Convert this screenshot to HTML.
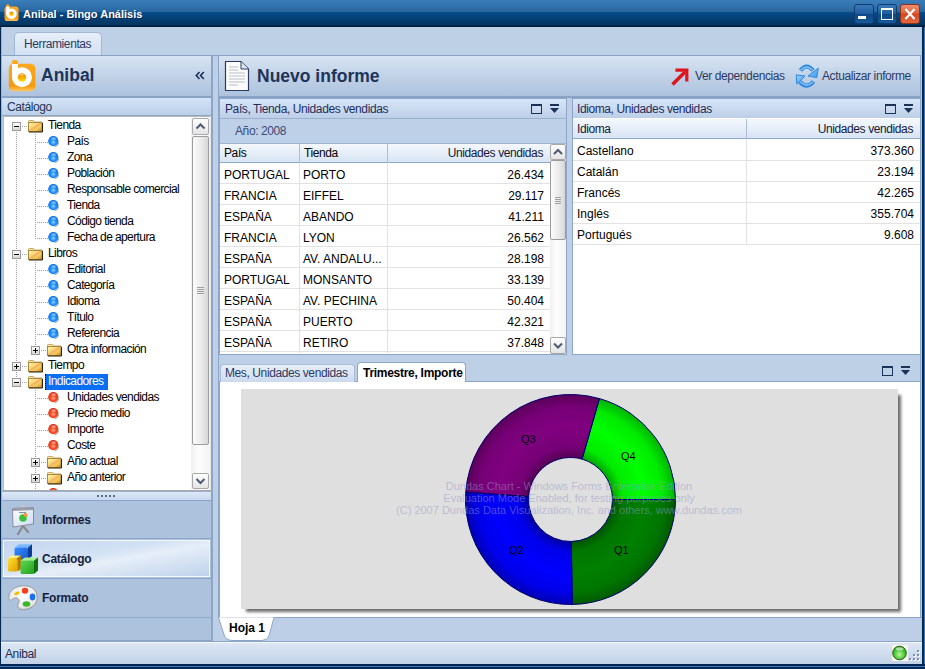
<!DOCTYPE html>
<html><head><meta charset="utf-8"><style>
*{box-sizing:border-box}
html,body{margin:0;padding:0;width:925px;height:669px;overflow:hidden;background:#BDD0E6;font-family:"Liberation Sans",sans-serif;font-size:12px;letter-spacing:-0.4px;color:#000}
.a{position:absolute}
.t{position:absolute;white-space:nowrap;line-height:1}
.exp{position:absolute;width:9px;height:9px;border:1px solid #9A9A9A;background:linear-gradient(#FFFFFF,#D6D6D6)}
.wbtn{position:absolute;top:4px;width:20px;height:20px;border:1px solid #0E3C70;border-radius:3px;background:linear-gradient(#3A7ABB,#1D5C9E 50%,#0D4787 51%,#195A99)}
.hdr{position:absolute;background:linear-gradient(#D6E3F2,#ADC2DE);border-bottom:2px solid #8AA2C4}
.cap{position:absolute;background:linear-gradient(#D4E3F7,#BCD0E9);border-bottom:1px solid #9AB0CC}
.gh{position:absolute;background:linear-gradient(#F4F8FD,#D8E4F4);border-bottom:1px solid #8FA9CC}
.r{text-align:right}
</style></head><body>
<div class="a" style="left:0px;top:0px;width:925px;height:27px;background:linear-gradient(#3B7EBA 0px,#2966A0 12px,#064C8B 12px,#04345F 25px,#001A3A 26px,#001A3A 27px)"></div>
<svg class="a" style="left:4px;top:4px" width="16" height="18" viewBox="0 0 30 34"><rect x="0.8" y="4.8" width="26.6" height="27.5" rx="6" fill="url(#lg)"/><rect x="4" y="1" width="6" height="6" rx="2" fill="#FFA820"/><rect x="4" y="5" width="6" height="14" fill="#fff"/><circle cx="14" cy="18.3" r="10" fill="#fff"/><circle cx="14" cy="18.5" r="4.2" fill="url(#lgi)"/></svg>
<div class="t" style="left:23px;top:9px;color:#fff;font-weight:bold;font-size:11px;letter-spacing:0;text-shadow:1px 1px 0 #0A2A55">Anibal - Bingo Análisis</div>
<div class="wbtn" style="left:854px"></div>
<div class="wbtn" style="left:877px"></div>
<div class="wbtn" style="left:900px;border-color:#8A3418;background:linear-gradient(#EE8E70,#E2603A 45%,#D8421A 50%,#E36A42)"></div>
<div class="a" style="left:858px;top:16px;width:8px;height:3px;background:#fff"></div>
<div class="a" style="left:881px;top:8px;width:12px;height:12px;border:1px solid #fff;border-top-width:2px"></div>
<svg class="a" style="left:900px;top:4px" width="20" height="20"><path d="M5.5 5L14.5 15M14.5 5L5.5 15" stroke="#fff" stroke-width="2.2"/></svg>
<div class="a" style="left:0px;top:27px;width:1px;height:642px;background:#04284F"></div>
<div class="a" style="left:1px;top:27px;width:1px;height:615px;background:#9BB3D3"></div>
<div class="a" style="left:922px;top:27px;width:2px;height:642px;background:#062A50"></div>
<div class="a" style="left:924px;top:27px;width:1px;height:642px;background:#3A78B8"></div>
<div class="a" style="left:0px;top:664px;width:925px;height:5px;background:linear-gradient(#04284F 0 2px,#3A7AC0 2px 3px,#04284F 3px)"></div>
<div class="a" style="left:14px;top:32px;width:88px;height:24px;border:1px solid #A2B7D3;border-bottom:none;border-radius:5px 5px 0 0;background:linear-gradient(#E6EEF9,#D3E0F1)"></div>
<div class="t" style="left:24px;top:38px;color:#2B3A62">Herramientas</div>
<div class="a" style="left:2px;top:55px;width:920px;height:1px;background:#8AA3C4"></div>
<div class="hdr" style="left:2px;top:56px;width:209px;height:42px"></div>
<svg class="a" style="left:8px;top:59px" width="30" height="34" viewBox="0 0 30 34"><defs><linearGradient id="lg" x1="0" y1="0" x2="0" y2="1"><stop offset="0" stop-color="#FFA820"/><stop offset="0.8" stop-color="#F59A10"/><stop offset="1" stop-color="#FFC860"/></linearGradient><linearGradient id="lgi" x1="0" y1="0" x2="0" y2="1"><stop offset="0" stop-color="#F08A00"/><stop offset="0.6" stop-color="#F8B000"/><stop offset="1" stop-color="#FFE800"/></linearGradient></defs><rect x="0.8" y="4.8" width="26.6" height="27.5" rx="5" fill="url(#lg)"/><rect x="4" y="1" width="6" height="6" rx="2" fill="#FFA820"/><rect x="4" y="5" width="6" height="14" fill="#fff"/><circle cx="14" cy="18.3" r="10" fill="#fff"/><circle cx="14" cy="18.5" r="4.2" fill="url(#lgi)"/><ellipse cx="14" cy="15.6" rx="2" ry="0.9" fill="rgba(255,255,255,0.5)"/></svg>
<div class="t" style="left:41px;top:67px;font-size:17.5px;letter-spacing:0;font-weight:bold;color:#1E3458">Anibal</div>
<svg class="a" style="left:195px;top:71px" width="10" height="9"><path d="M4.5 1L1.3 4.5L4.5 8M8.8 1L5.6 4.5L8.8 8" stroke="#1E3458" stroke-width="1.7" fill="none"/></svg>
<div class="cap" style="left:2px;top:98px;width:210px;height:18px;border-bottom-color:#8EA6C6"></div>
<div class="t" style="left:7px;top:101px;color:#1E3458">Catálogo</div>
<div class="a" style="left:3px;top:116px;width:208px;height:375px;background:#fff;border-left:1px solid #B8B8B8;border-top:1px solid #B8B8B8"></div>
<div class="a" style="left:210px;top:116px;width:1px;height:375px;background:#E8E8E8"></div>
<div class="a" style="left:211px;top:56px;width:2px;height:586px;background:#8DA6C8"></div>
<div class="a" style="left:0;top:0;width:925px;height:491px;clip-path:polygon(4px 117px,210px 117px,210px 490px,4px 490px)"><svg width="0" height="0" style="position:absolute"><defs><linearGradient id="fg" x1="0" y1="0.1" x2="0.9" y2="1"><stop offset="0" stop-color="#FFF6B0"/><stop offset="0.35" stop-color="#FAD878"/><stop offset="0.5" stop-color="#F2B460"/><stop offset="0.68" stop-color="#F8CC60"/><stop offset="1" stop-color="#C88A18"/></linearGradient><radialGradient id="gb" cx="0.5" cy="0.6" r="0.58"><stop offset="0" stop-color="#90D4FF"/><stop offset="0.45" stop-color="#1E90FF"/><stop offset="1" stop-color="#1070E8"/></radialGradient><radialGradient id="gr" cx="0.5" cy="0.6" r="0.58"><stop offset="0" stop-color="#FFB090"/><stop offset="0.45" stop-color="#F84C28"/><stop offset="1" stop-color="#D83414"/></radialGradient></defs></svg><div class="a" style="left:16px;top:132px;width:1px;height:249px;background:repeating-linear-gradient(180deg,#A0A0A0 0 1px,transparent 1px 2px)"></div><div class="a" style="left:35px;top:134px;width:1px;height:105px;background:repeating-linear-gradient(180deg,#A0A0A0 0 1px,transparent 1px 2px)"></div><div class="a" style="left:35px;top:262px;width:1px;height:89px;background:repeating-linear-gradient(180deg,#A0A0A0 0 1px,transparent 1px 2px)"></div><div class="a" style="left:35px;top:390px;width:1px;height:106px;background:repeating-linear-gradient(180deg,#A0A0A0 0 1px,transparent 1px 2px)"></div><div class="exp" style="left:12px;top:122px"></div><div class="a" style="left:14px;top:126px;width:5px;height:1px;background:#000"></div><div class="a" style="left:22px;top:126px;width:6px;height:1px;background:repeating-linear-gradient(90deg,#A0A0A0 0 1px,transparent 1px 2px)"></div><svg class="a" style="left:28px;top:120px" width="16" height="13" viewBox="0 0 16 13"><path d="M0.5 2.5V1.3Q0.5 0.5 1.3 0.5H5.5L6.5 2H14" fill="#FBEBB0" stroke="#C8A868" stroke-width="1"/><rect x="0.5" y="2.5" width="13.5" height="9" fill="url(#fg)" stroke="#A8883A" stroke-width="1"/><path d="M14.5 3V12H1" stroke="#2A2010" stroke-width="1" fill="none"/></svg><div class="t" style="left:48px;top:119px;font-size:12px;letter-spacing:-0.6px">Tienda</div><div class="a" style="left:37px;top:142px;width:11px;height:1px;background:repeating-linear-gradient(90deg,#A0A0A0 0 1px,transparent 1px 2px)"></div><svg class="a" style="left:48px;top:136px" width="12" height="12" viewBox="0 0 12 12"><circle cx="5.3" cy="5.2" r="5.1" fill="url(#gb)"/><ellipse cx="5.5" cy="2.6" rx="2.4" ry="1.2" fill="rgba(255,255,255,0.45)"/><path d="M10.8 6.5A5.3 5.3 0 0 1 6.5 10.8" stroke="rgba(0,0,0,0.28)" stroke-width="1.2" fill="none"/></svg><div class="t" style="left:67px;top:135px;font-size:12px;letter-spacing:-0.6px">País</div><div class="a" style="left:37px;top:158px;width:11px;height:1px;background:repeating-linear-gradient(90deg,#A0A0A0 0 1px,transparent 1px 2px)"></div><svg class="a" style="left:48px;top:152px" width="12" height="12" viewBox="0 0 12 12"><circle cx="5.3" cy="5.2" r="5.1" fill="url(#gb)"/><ellipse cx="5.5" cy="2.6" rx="2.4" ry="1.2" fill="rgba(255,255,255,0.45)"/><path d="M10.8 6.5A5.3 5.3 0 0 1 6.5 10.8" stroke="rgba(0,0,0,0.28)" stroke-width="1.2" fill="none"/></svg><div class="t" style="left:67px;top:151px;font-size:12px;letter-spacing:-0.6px">Zona</div><div class="a" style="left:37px;top:174px;width:11px;height:1px;background:repeating-linear-gradient(90deg,#A0A0A0 0 1px,transparent 1px 2px)"></div><svg class="a" style="left:48px;top:168px" width="12" height="12" viewBox="0 0 12 12"><circle cx="5.3" cy="5.2" r="5.1" fill="url(#gb)"/><ellipse cx="5.5" cy="2.6" rx="2.4" ry="1.2" fill="rgba(255,255,255,0.45)"/><path d="M10.8 6.5A5.3 5.3 0 0 1 6.5 10.8" stroke="rgba(0,0,0,0.28)" stroke-width="1.2" fill="none"/></svg><div class="t" style="left:67px;top:167px;font-size:12px;letter-spacing:-0.6px">Población</div><div class="a" style="left:37px;top:190px;width:11px;height:1px;background:repeating-linear-gradient(90deg,#A0A0A0 0 1px,transparent 1px 2px)"></div><svg class="a" style="left:48px;top:184px" width="12" height="12" viewBox="0 0 12 12"><circle cx="5.3" cy="5.2" r="5.1" fill="url(#gb)"/><ellipse cx="5.5" cy="2.6" rx="2.4" ry="1.2" fill="rgba(255,255,255,0.45)"/><path d="M10.8 6.5A5.3 5.3 0 0 1 6.5 10.8" stroke="rgba(0,0,0,0.28)" stroke-width="1.2" fill="none"/></svg><div class="t" style="left:67px;top:183px;font-size:12px;letter-spacing:-0.6px">Responsable comercial</div><div class="a" style="left:37px;top:206px;width:11px;height:1px;background:repeating-linear-gradient(90deg,#A0A0A0 0 1px,transparent 1px 2px)"></div><svg class="a" style="left:48px;top:200px" width="12" height="12" viewBox="0 0 12 12"><circle cx="5.3" cy="5.2" r="5.1" fill="url(#gb)"/><ellipse cx="5.5" cy="2.6" rx="2.4" ry="1.2" fill="rgba(255,255,255,0.45)"/><path d="M10.8 6.5A5.3 5.3 0 0 1 6.5 10.8" stroke="rgba(0,0,0,0.28)" stroke-width="1.2" fill="none"/></svg><div class="t" style="left:67px;top:199px;font-size:12px;letter-spacing:-0.6px">Tienda</div><div class="a" style="left:37px;top:222px;width:11px;height:1px;background:repeating-linear-gradient(90deg,#A0A0A0 0 1px,transparent 1px 2px)"></div><svg class="a" style="left:48px;top:216px" width="12" height="12" viewBox="0 0 12 12"><circle cx="5.3" cy="5.2" r="5.1" fill="url(#gb)"/><ellipse cx="5.5" cy="2.6" rx="2.4" ry="1.2" fill="rgba(255,255,255,0.45)"/><path d="M10.8 6.5A5.3 5.3 0 0 1 6.5 10.8" stroke="rgba(0,0,0,0.28)" stroke-width="1.2" fill="none"/></svg><div class="t" style="left:67px;top:215px;font-size:12px;letter-spacing:-0.6px">Código tienda</div><div class="a" style="left:37px;top:238px;width:11px;height:1px;background:repeating-linear-gradient(90deg,#A0A0A0 0 1px,transparent 1px 2px)"></div><svg class="a" style="left:48px;top:232px" width="12" height="12" viewBox="0 0 12 12"><circle cx="5.3" cy="5.2" r="5.1" fill="url(#gb)"/><ellipse cx="5.5" cy="2.6" rx="2.4" ry="1.2" fill="rgba(255,255,255,0.45)"/><path d="M10.8 6.5A5.3 5.3 0 0 1 6.5 10.8" stroke="rgba(0,0,0,0.28)" stroke-width="1.2" fill="none"/></svg><div class="t" style="left:67px;top:231px;font-size:12px;letter-spacing:-0.6px">Fecha de apertura</div><div class="exp" style="left:12px;top:250px"></div><div class="a" style="left:14px;top:254px;width:5px;height:1px;background:#000"></div><div class="a" style="left:22px;top:254px;width:6px;height:1px;background:repeating-linear-gradient(90deg,#A0A0A0 0 1px,transparent 1px 2px)"></div><svg class="a" style="left:28px;top:248px" width="16" height="13" viewBox="0 0 16 13"><path d="M0.5 2.5V1.3Q0.5 0.5 1.3 0.5H5.5L6.5 2H14" fill="#FBEBB0" stroke="#C8A868" stroke-width="1"/><rect x="0.5" y="2.5" width="13.5" height="9" fill="url(#fg)" stroke="#A8883A" stroke-width="1"/><path d="M14.5 3V12H1" stroke="#2A2010" stroke-width="1" fill="none"/></svg><div class="t" style="left:48px;top:247px;font-size:12px;letter-spacing:-0.6px">Libros</div><div class="a" style="left:37px;top:270px;width:11px;height:1px;background:repeating-linear-gradient(90deg,#A0A0A0 0 1px,transparent 1px 2px)"></div><svg class="a" style="left:48px;top:264px" width="12" height="12" viewBox="0 0 12 12"><circle cx="5.3" cy="5.2" r="5.1" fill="url(#gb)"/><ellipse cx="5.5" cy="2.6" rx="2.4" ry="1.2" fill="rgba(255,255,255,0.45)"/><path d="M10.8 6.5A5.3 5.3 0 0 1 6.5 10.8" stroke="rgba(0,0,0,0.28)" stroke-width="1.2" fill="none"/></svg><div class="t" style="left:67px;top:263px;font-size:12px;letter-spacing:-0.6px">Editorial</div><div class="a" style="left:37px;top:286px;width:11px;height:1px;background:repeating-linear-gradient(90deg,#A0A0A0 0 1px,transparent 1px 2px)"></div><svg class="a" style="left:48px;top:280px" width="12" height="12" viewBox="0 0 12 12"><circle cx="5.3" cy="5.2" r="5.1" fill="url(#gb)"/><ellipse cx="5.5" cy="2.6" rx="2.4" ry="1.2" fill="rgba(255,255,255,0.45)"/><path d="M10.8 6.5A5.3 5.3 0 0 1 6.5 10.8" stroke="rgba(0,0,0,0.28)" stroke-width="1.2" fill="none"/></svg><div class="t" style="left:67px;top:279px;font-size:12px;letter-spacing:-0.6px">Categoría</div><div class="a" style="left:37px;top:302px;width:11px;height:1px;background:repeating-linear-gradient(90deg,#A0A0A0 0 1px,transparent 1px 2px)"></div><svg class="a" style="left:48px;top:296px" width="12" height="12" viewBox="0 0 12 12"><circle cx="5.3" cy="5.2" r="5.1" fill="url(#gb)"/><ellipse cx="5.5" cy="2.6" rx="2.4" ry="1.2" fill="rgba(255,255,255,0.45)"/><path d="M10.8 6.5A5.3 5.3 0 0 1 6.5 10.8" stroke="rgba(0,0,0,0.28)" stroke-width="1.2" fill="none"/></svg><div class="t" style="left:67px;top:295px;font-size:12px;letter-spacing:-0.6px">Idioma</div><div class="a" style="left:37px;top:318px;width:11px;height:1px;background:repeating-linear-gradient(90deg,#A0A0A0 0 1px,transparent 1px 2px)"></div><svg class="a" style="left:48px;top:312px" width="12" height="12" viewBox="0 0 12 12"><circle cx="5.3" cy="5.2" r="5.1" fill="url(#gb)"/><ellipse cx="5.5" cy="2.6" rx="2.4" ry="1.2" fill="rgba(255,255,255,0.45)"/><path d="M10.8 6.5A5.3 5.3 0 0 1 6.5 10.8" stroke="rgba(0,0,0,0.28)" stroke-width="1.2" fill="none"/></svg><div class="t" style="left:67px;top:311px;font-size:12px;letter-spacing:-0.6px">Título</div><div class="a" style="left:37px;top:334px;width:11px;height:1px;background:repeating-linear-gradient(90deg,#A0A0A0 0 1px,transparent 1px 2px)"></div><svg class="a" style="left:48px;top:328px" width="12" height="12" viewBox="0 0 12 12"><circle cx="5.3" cy="5.2" r="5.1" fill="url(#gb)"/><ellipse cx="5.5" cy="2.6" rx="2.4" ry="1.2" fill="rgba(255,255,255,0.45)"/><path d="M10.8 6.5A5.3 5.3 0 0 1 6.5 10.8" stroke="rgba(0,0,0,0.28)" stroke-width="1.2" fill="none"/></svg><div class="t" style="left:67px;top:327px;font-size:12px;letter-spacing:-0.6px">Referencia</div><div class="exp" style="left:31px;top:346px"></div><div class="a" style="left:33px;top:350px;width:5px;height:1px;background:#000"></div><div class="a" style="left:35px;top:348px;width:1px;height:5px;background:#000"></div><div class="a" style="left:41px;top:350px;width:6px;height:1px;background:repeating-linear-gradient(90deg,#A0A0A0 0 1px,transparent 1px 2px)"></div><svg class="a" style="left:47px;top:344px" width="16" height="13" viewBox="0 0 16 13"><path d="M0.5 2.5V1.3Q0.5 0.5 1.3 0.5H5.5L6.5 2H14" fill="#FBEBB0" stroke="#C8A868" stroke-width="1"/><rect x="0.5" y="2.5" width="13.5" height="9" fill="url(#fg)" stroke="#A8883A" stroke-width="1"/><path d="M14.5 3V12H1" stroke="#2A2010" stroke-width="1" fill="none"/></svg><div class="t" style="left:67px;top:343px;font-size:12px;letter-spacing:-0.6px">Otra información</div><div class="exp" style="left:12px;top:362px"></div><div class="a" style="left:14px;top:366px;width:5px;height:1px;background:#000"></div><div class="a" style="left:16px;top:364px;width:1px;height:5px;background:#000"></div><div class="a" style="left:22px;top:366px;width:6px;height:1px;background:repeating-linear-gradient(90deg,#A0A0A0 0 1px,transparent 1px 2px)"></div><svg class="a" style="left:28px;top:360px" width="16" height="13" viewBox="0 0 16 13"><path d="M0.5 2.5V1.3Q0.5 0.5 1.3 0.5H5.5L6.5 2H14" fill="#FBEBB0" stroke="#C8A868" stroke-width="1"/><rect x="0.5" y="2.5" width="13.5" height="9" fill="url(#fg)" stroke="#A8883A" stroke-width="1"/><path d="M14.5 3V12H1" stroke="#2A2010" stroke-width="1" fill="none"/></svg><div class="t" style="left:48px;top:359px;font-size:12px;letter-spacing:-0.6px">Tiempo</div><div class="exp" style="left:12px;top:378px"></div><div class="a" style="left:14px;top:382px;width:5px;height:1px;background:#000"></div><div class="a" style="left:22px;top:382px;width:6px;height:1px;background:repeating-linear-gradient(90deg,#A0A0A0 0 1px,transparent 1px 2px)"></div><svg class="a" style="left:28px;top:376px" width="16" height="13" viewBox="0 0 16 13"><path d="M0.5 2.5V1.3Q0.5 0.5 1.3 0.5H5.5L6.5 2H14" fill="#FBEBB0" stroke="#C8A868" stroke-width="1"/><rect x="0.5" y="2.5" width="13.5" height="9" fill="url(#fg)" stroke="#A8883A" stroke-width="1"/><path d="M14.5 3V12H1" stroke="#2A2010" stroke-width="1" fill="none"/></svg><div class="a" style="left:45px;top:374px;width:63px;height:16px;background:#0B6FF3;border-left:1px dotted #000"></div><div class="t" style="left:48px;top:375px;color:#fff;font-size:12px;letter-spacing:-0.6px">Indicadores</div><div class="a" style="left:37px;top:398px;width:11px;height:1px;background:repeating-linear-gradient(90deg,#A0A0A0 0 1px,transparent 1px 2px)"></div><svg class="a" style="left:48px;top:392px" width="12" height="12" viewBox="0 0 12 12"><circle cx="5.3" cy="5.2" r="5.1" fill="url(#gr)"/><ellipse cx="5.5" cy="2.6" rx="2.4" ry="1.2" fill="rgba(255,255,255,0.45)"/><path d="M10.8 6.5A5.3 5.3 0 0 1 6.5 10.8" stroke="rgba(0,0,0,0.28)" stroke-width="1.2" fill="none"/></svg><div class="t" style="left:67px;top:391px;font-size:12px;letter-spacing:-0.6px">Unidades vendidas</div><div class="a" style="left:37px;top:414px;width:11px;height:1px;background:repeating-linear-gradient(90deg,#A0A0A0 0 1px,transparent 1px 2px)"></div><svg class="a" style="left:48px;top:408px" width="12" height="12" viewBox="0 0 12 12"><circle cx="5.3" cy="5.2" r="5.1" fill="url(#gr)"/><ellipse cx="5.5" cy="2.6" rx="2.4" ry="1.2" fill="rgba(255,255,255,0.45)"/><path d="M10.8 6.5A5.3 5.3 0 0 1 6.5 10.8" stroke="rgba(0,0,0,0.28)" stroke-width="1.2" fill="none"/></svg><div class="t" style="left:67px;top:407px;font-size:12px;letter-spacing:-0.6px">Precio medio</div><div class="a" style="left:37px;top:430px;width:11px;height:1px;background:repeating-linear-gradient(90deg,#A0A0A0 0 1px,transparent 1px 2px)"></div><svg class="a" style="left:48px;top:424px" width="12" height="12" viewBox="0 0 12 12"><circle cx="5.3" cy="5.2" r="5.1" fill="url(#gr)"/><ellipse cx="5.5" cy="2.6" rx="2.4" ry="1.2" fill="rgba(255,255,255,0.45)"/><path d="M10.8 6.5A5.3 5.3 0 0 1 6.5 10.8" stroke="rgba(0,0,0,0.28)" stroke-width="1.2" fill="none"/></svg><div class="t" style="left:67px;top:423px;font-size:12px;letter-spacing:-0.6px">Importe</div><div class="a" style="left:37px;top:446px;width:11px;height:1px;background:repeating-linear-gradient(90deg,#A0A0A0 0 1px,transparent 1px 2px)"></div><svg class="a" style="left:48px;top:440px" width="12" height="12" viewBox="0 0 12 12"><circle cx="5.3" cy="5.2" r="5.1" fill="url(#gr)"/><ellipse cx="5.5" cy="2.6" rx="2.4" ry="1.2" fill="rgba(255,255,255,0.45)"/><path d="M10.8 6.5A5.3 5.3 0 0 1 6.5 10.8" stroke="rgba(0,0,0,0.28)" stroke-width="1.2" fill="none"/></svg><div class="t" style="left:67px;top:439px;font-size:12px;letter-spacing:-0.6px">Coste</div><div class="exp" style="left:31px;top:458px"></div><div class="a" style="left:33px;top:462px;width:5px;height:1px;background:#000"></div><div class="a" style="left:35px;top:460px;width:1px;height:5px;background:#000"></div><div class="a" style="left:41px;top:462px;width:6px;height:1px;background:repeating-linear-gradient(90deg,#A0A0A0 0 1px,transparent 1px 2px)"></div><svg class="a" style="left:47px;top:456px" width="16" height="13" viewBox="0 0 16 13"><path d="M0.5 2.5V1.3Q0.5 0.5 1.3 0.5H5.5L6.5 2H14" fill="#FBEBB0" stroke="#C8A868" stroke-width="1"/><rect x="0.5" y="2.5" width="13.5" height="9" fill="url(#fg)" stroke="#A8883A" stroke-width="1"/><path d="M14.5 3V12H1" stroke="#2A2010" stroke-width="1" fill="none"/></svg><div class="t" style="left:67px;top:455px;font-size:12px;letter-spacing:-0.6px">Año actual</div><div class="exp" style="left:31px;top:474px"></div><div class="a" style="left:33px;top:478px;width:5px;height:1px;background:#000"></div><div class="a" style="left:35px;top:476px;width:1px;height:5px;background:#000"></div><div class="a" style="left:41px;top:478px;width:6px;height:1px;background:repeating-linear-gradient(90deg,#A0A0A0 0 1px,transparent 1px 2px)"></div><svg class="a" style="left:47px;top:472px" width="16" height="13" viewBox="0 0 16 13"><path d="M0.5 2.5V1.3Q0.5 0.5 1.3 0.5H5.5L6.5 2H14" fill="#FBEBB0" stroke="#C8A868" stroke-width="1"/><rect x="0.5" y="2.5" width="13.5" height="9" fill="url(#fg)" stroke="#A8883A" stroke-width="1"/><path d="M14.5 3V12H1" stroke="#2A2010" stroke-width="1" fill="none"/></svg><div class="t" style="left:67px;top:471px;font-size:12px;letter-spacing:-0.6px">Año anterior</div><div class="a" style="left:37px;top:494px;width:11px;height:1px;background:repeating-linear-gradient(90deg,#A0A0A0 0 1px,transparent 1px 2px)"></div><svg class="a" style="left:48px;top:488px" width="12" height="12" viewBox="0 0 12 12"><circle cx="5.3" cy="5.2" r="5.1" fill="url(#gr)"/><ellipse cx="5.5" cy="2.6" rx="2.4" ry="1.2" fill="rgba(255,255,255,0.45)"/><path d="M10.8 6.5A5.3 5.3 0 0 1 6.5 10.8" stroke="rgba(0,0,0,0.28)" stroke-width="1.2" fill="none"/></svg><div class="t" style="left:67px;top:487px;font-size:12px;letter-spacing:-0.6px"><span style="position:relative;top:6px">·  ·</span></div><div class="a" style="left:191px;top:117px;width:19px;height:374px;background:linear-gradient(90deg,#F0F0F0,#FDFDFD 40%,#F3F3F3)"></div></div>
<div class="a" style="left:192px;top:118px;width:17px;height:17px;border:1px solid #A8A8A8;border-radius:2px;background:linear-gradient(#FEFEFE,#E4E4E4)"></div>
<svg class="a" style="left:0;top:0" width="925" height="669" viewBox="0 0 925 669"><path d="M196.5 128.5L200.5 124.5L204.5 128.5" stroke="#4D5A70" stroke-width="2" fill="none"/></svg>
<div class="a" style="left:192px;top:136px;width:17px;height:309px;border:1px solid #9C9C9C;border-radius:2px;background:linear-gradient(90deg,#FBFBFB,#E9E9E9 60%,#D6D6D6)"></div>
<div class="a" style="left:197px;top:287px;width:7px;height:1px;background:#A0A0A0"></div>
<div class="a" style="left:197px;top:289px;width:7px;height:1px;background:#A0A0A0"></div>
<div class="a" style="left:197px;top:291px;width:7px;height:1px;background:#A0A0A0"></div>
<div class="a" style="left:197px;top:293px;width:7px;height:1px;background:#A0A0A0"></div>
<div class="a" style="left:192px;top:473px;width:17px;height:16px;border:1px solid #A8A8A8;border-radius:2px;background:linear-gradient(#FEFEFE,#E4E4E4)"></div>
<svg class="a" style="left:0;top:0" width="925" height="669" viewBox="0 0 925 669"><path d="M196.5 479.0L200.5 483.0L204.5 479.0" stroke="#4D5A70" stroke-width="2" fill="none"/></svg>
<div class="a" style="left:3px;top:490px;width:208px;height:1px;background:#A8A8A8"></div>
<div class="a" style="left:2px;top:491px;width:210px;height:1px;background:#9AB0CC"></div>
<div class="a" style="left:2px;top:492px;width:209px;height:8px;background:linear-gradient(#DDE8F6,#C8D8EE)"></div>
<div class="a" style="left:97px;top:495px;width:2px;height:2px;background:#5A6E8C"></div>
<div class="a" style="left:101px;top:495px;width:2px;height:2px;background:#5A6E8C"></div>
<div class="a" style="left:105px;top:495px;width:2px;height:2px;background:#5A6E8C"></div>
<div class="a" style="left:109px;top:495px;width:2px;height:2px;background:#5A6E8C"></div>
<div class="a" style="left:113px;top:495px;width:2px;height:2px;background:#5A6E8C"></div>
<div class="a" style="left:2px;top:500px;width:209px;height:1px;background:#8DA6C8"></div>
<div class="a" style="left:2px;top:501px;width:209px;height:140px;background:#ADC2DD"></div>
<div class="a" style="left:2px;top:538px;width:209px;height:1px;background:#8DA6C8"></div>
<div class="a" style="left:3px;top:540px;width:207px;height:37px;border:1px solid #F4F8FD;background:linear-gradient(170deg,#C4D6EF 0%,#D2E1F3 40%,#E6EEF8 55%,#BFD2EB 100%)"></div>
<div class="a" style="left:2px;top:578px;width:209px;height:1px;background:#8DA6C8"></div>
<div class="a" style="left:2px;top:617px;width:209px;height:1px;background:#8DA6C8"></div>
<div class="t" style="left:42px;top:514px;font-weight:bold;font-size:12px;letter-spacing:-0.25px;color:#141E3C">Informes</div>
<div class="t" style="left:42px;top:553px;font-weight:bold;font-size:12px;letter-spacing:-0.25px;color:#141E3C">Catálogo</div>
<div class="t" style="left:42px;top:592px;font-weight:bold;font-size:12px;letter-spacing:-0.25px;color:#141E3C">Formato</div>
<svg class="a" style="left:11px;top:504px" width="25" height="32" viewBox="0 0 25 32"><defs><linearGradient id="brd" x1="0" y1="0" x2="1" y2="1"><stop offset="0" stop-color="#FFFFFF"/><stop offset="1" stop-color="#C8DCF0"/></linearGradient></defs><path d="M12 22L7 30M12 22L17 28" stroke="#8A8A8A" stroke-width="2.2" stroke-linecap="round"/><circle cx="12" cy="3" r="2" fill="#C8C8C8"/><path d="M1.5 4.5L22.5 3.5V20L2 23Z" fill="url(#brd)" stroke="#8A8A9A" stroke-width="1"/><path d="M1.5 4.5L22.5 3.5V6L1.5 7Z" fill="#9A9AA8"/><circle cx="12" cy="14" r="3.8" fill="#3CC03C"/><path d="M13 12.5V8.6A3.9 3.9 0 0 1 16.8 12.5Z" fill="#F89838"/><path d="M8 8.5H15" stroke="#8090A8" stroke-width="1"/></svg>
<svg class="a" style="left:7px;top:543px" width="32" height="32" viewBox="0 0 32 32"><defs><linearGradient id="cbf" x1="0" y1="0" x2="1" y2="1"><stop offset="0" stop-color="#3A8CFF"/><stop offset="1" stop-color="#1458D0"/></linearGradient><linearGradient id="cyf" x1="0" y1="0" x2="1" y2="1"><stop offset="0" stop-color="#FFE030"/><stop offset="1" stop-color="#E0A000"/></linearGradient><linearGradient id="cgf" x1="0" y1="0" x2="1" y2="1"><stop offset="0" stop-color="#60D850"/><stop offset="1" stop-color="#20A020"/></linearGradient></defs><path d="M7.5 4.5L12 1.2H25L21 4.5Z" fill="#78B8FF"/><rect x="7.5" y="4.5" width="13.5" height="12.5" rx="1.5" fill="url(#cbf)"/><path d="M21 4.5L25 1.2V13L21 17Z" fill="#0C3C98"/><path d="M1 15L4.5 12.5H14L10.5 15Z" fill="#FFF080"/><rect x="1" y="15" width="9.5" height="13.5" rx="1.5" fill="url(#cyf)"/><path d="M10.5 15L14 12.5V26L10.5 28.5Z" fill="#B07800"/><path d="M13.5 17.5L18 14.5H31L27 17.5Z" fill="#A8F090"/><rect x="13.5" y="17.5" width="13.5" height="13.5" rx="1.5" fill="url(#cgf)"/><path d="M27 17.5L31 14.5V27.5L27 31Z" fill="#107010"/></svg>
<svg class="a" style="left:8px;top:585px" width="30" height="26" viewBox="0 0 30 26"><defs><radialGradient id="pal" cx="0.5" cy="0.4" r="0.6"><stop offset="0" stop-color="#FFFFFF"/><stop offset="0.8" stop-color="#EAEAEA"/><stop offset="1" stop-color="#C0C0C0"/></radialGradient></defs><path d="M16 0.8C8 0.8 0.8 5 0.8 12.5C0.8 15 2.5 16 4 14.5C6 12.5 10 12 11 15C12 18 8 20 10.5 23C12.5 25.3 16 25.3 20 24C26 22 29.2 17.5 29.2 12.5C29.2 5 23.5 0.8 16 0.8Z" fill="url(#pal)" stroke="#9A9A9A" stroke-width="1"/><path d="M6 9.5C7 7 9 6 11 6.5C12 7.5 11 9.5 9 10C8 10.3 6.5 10.5 6 9.5Z" fill="#F2C000"/><ellipse cx="17" cy="5.8" rx="3.2" ry="3" fill="#F04020"/><ellipse cx="24.5" cy="12" rx="2.8" ry="3.4" fill="#1A70F0"/><ellipse cx="18.5" cy="19" rx="3.8" ry="2.8" fill="#38B828"/></svg>
<div class="a" style="left:218px;top:56px;width:1px;height:562px;background:#8DA6C8"></div>
<div class="hdr" style="left:219px;top:56px;width:701px;height:42px"></div>
<svg class="a" style="left:224px;top:60px" width="26" height="32" viewBox="0 0 26 32"><path d="M1.5 1.5H17L24.5 9V30.5H1.5Z" fill="#FCFCFC" stroke="#2A3A60" stroke-width="1.2"/><path d="M17 1.5V9H24.5" fill="#E0E6F0" stroke="#2A3A60" stroke-width="1"/><path d="M5 7H14M5 10H14M5 13H21M5 16H21M5 19H21M5 22H21M5 25H14" stroke="#B8BEC8" stroke-width="1"/></svg>
<div class="t" style="left:257px;top:68px;font-size:17.5px;letter-spacing:0;font-weight:bold;color:#1E3458">Nuevo informe</div>
<svg class="a" style="left:670px;top:67px" width="20" height="20" viewBox="0 0 20 20"><path d="M2.5 17.5L15 5" stroke="#E0141E" stroke-width="3.6"/><path d="M7 3.2H16.8V13" stroke="#E0141E" stroke-width="3.2" fill="none" stroke-linecap="square"/></svg>
<div class="t" style="left:695px;top:70px;color:#2B3A62">Ver dependencias</div>
<svg class="a" style="left:790px;top:60px" width="32" height="32" viewBox="0 0 32 32"><defs><linearGradient id="rf" x1="0" y1="0" x2="1" y2="1"><stop offset="0" stop-color="#9AD4FF"/><stop offset="1" stop-color="#3A98EE"/></linearGradient></defs><path d="M10.5 10.5Q16.5 2.5 23 10.5" stroke="#2F86E0" stroke-width="4.2" fill="none" stroke-linecap="butt"/><path d="M10.8 10.2Q16.5 3.8 22.5 10.2" stroke="#7CC4FA" stroke-width="1.6" fill="none"/><path d="M18 16L28.2 8.2L26.8 17.6Z" fill="url(#rf)" stroke="#2F86E0" stroke-width="1" stroke-linejoin="round"/><path d="M23.5 21.5Q17 29.5 10 22" stroke="#2F86E0" stroke-width="4.2" fill="none"/><path d="M23 21.8Q17 28.2 10.5 22.2" stroke="#7CC4FA" stroke-width="1.6" fill="none"/><path d="M15 16L6.2 14.8L6.8 24.2Z" fill="url(#rf)" stroke="#2F86E0" stroke-width="1" stroke-linejoin="round"/></svg>
<div class="t" style="left:822px;top:70px;color:#2B3A62">Actualizar informe</div>
<div class="a" style="left:219px;top:98px;width:348px;height:1px;background:#8DA6C8"></div>
<div class="a" style="left:219px;top:98px;width:348px;height:1px;background:#8DA6C8"></div>
<div class="cap" style="left:219px;top:99px;width:348px;height:20px;border-left:1px solid #8DA6C8;border-right:1px solid #8DA6C8;background:linear-gradient(#D8E6F8,#BCCFE8)"></div>
<div class="t" style="left:225px;top:103px;color:#1F2D5C">País, Tienda, Unidades vendidas</div>
<div class="a" style="left:531px;top:104px;width:11px;height:10px;border:1px solid #1A3258;border-top-width:2px"></div>
<svg class="a" style="left:550px;top:104px" width="9" height="10"><rect x="0" y="0" width="9" height="2" fill="#1A3258"/><path d="M0 4H9L4.5 9Z" fill="#1A3258"/></svg>
<div class="a" style="left:219px;top:119px;width:348px;height:24px;background:#BDD0E8;border-left:1px solid #8DA6C8;border-right:1px solid #8DA6C8"></div>
<div class="t" style="left:235px;top:125px;color:#3A4A78">Año: 2008</div>
<div class="a" style="left:219px;top:143px;width:348px;height:212px;background:#fff;border:1px solid #8DA6C8;border-top:1px solid #9EB5D2"></div>
<div class="gh" style="left:220px;top:144px;width:330px;height:19px"></div>
<div class="a" style="left:299px;top:144px;width:1px;height:19px;background:#A9BDD8"></div>
<div class="a" style="left:387px;top:144px;width:1px;height:19px;background:#A9BDD8"></div>
<div class="t" style="left:224px;top:147px;color:#000">País</div>
<div class="t" style="left:304px;top:147px;color:#000">Tienda</div>
<div class="t" style="right:382px;top:147px;color:#141838">Unidades vendidas</div>
<div class="a" style="left:220px;top:183px;width:330px;height:1px;background:#E2E2E2"></div>
<div class="t" style="left:224px;top:169px;font-size:12px;letter-spacing:0">PORTUGAL</div>
<div class="t" style="left:303px;top:169px;font-size:12px;letter-spacing:0">PORTO</div>
<div class="t" style="right:381px;top:169px;font-size:12px;letter-spacing:0">26.434</div>
<div class="a" style="left:220px;top:204px;width:330px;height:1px;background:#E2E2E2"></div>
<div class="t" style="left:224px;top:190px;font-size:12px;letter-spacing:0">FRANCIA</div>
<div class="t" style="left:303px;top:190px;font-size:12px;letter-spacing:0">EIFFEL</div>
<div class="t" style="right:381px;top:190px;font-size:12px;letter-spacing:0">29.117</div>
<div class="a" style="left:220px;top:225px;width:330px;height:1px;background:#E2E2E2"></div>
<div class="t" style="left:224px;top:211px;font-size:12px;letter-spacing:0">ESPAÑA</div>
<div class="t" style="left:303px;top:211px;font-size:12px;letter-spacing:0">ABANDO</div>
<div class="t" style="right:381px;top:211px;font-size:12px;letter-spacing:0">41.211</div>
<div class="a" style="left:220px;top:246px;width:330px;height:1px;background:#E2E2E2"></div>
<div class="t" style="left:224px;top:232px;font-size:12px;letter-spacing:0">FRANCIA</div>
<div class="t" style="left:303px;top:232px;font-size:12px;letter-spacing:0">LYON</div>
<div class="t" style="right:381px;top:232px;font-size:12px;letter-spacing:0">26.562</div>
<div class="a" style="left:220px;top:267px;width:330px;height:1px;background:#E2E2E2"></div>
<div class="t" style="left:224px;top:253px;font-size:12px;letter-spacing:0">ESPAÑA</div>
<div class="t" style="left:303px;top:253px;font-size:12px;letter-spacing:0">AV. ANDALU...</div>
<div class="t" style="right:381px;top:253px;font-size:12px;letter-spacing:0">28.198</div>
<div class="a" style="left:220px;top:288px;width:330px;height:1px;background:#E2E2E2"></div>
<div class="t" style="left:224px;top:274px;font-size:12px;letter-spacing:0">PORTUGAL</div>
<div class="t" style="left:303px;top:274px;font-size:12px;letter-spacing:0">MONSANTO</div>
<div class="t" style="right:381px;top:274px;font-size:12px;letter-spacing:0">33.139</div>
<div class="a" style="left:220px;top:309px;width:330px;height:1px;background:#E2E2E2"></div>
<div class="t" style="left:224px;top:295px;font-size:12px;letter-spacing:0">ESPAÑA</div>
<div class="t" style="left:303px;top:295px;font-size:12px;letter-spacing:0">AV. PECHINA</div>
<div class="t" style="right:381px;top:295px;font-size:12px;letter-spacing:0">50.404</div>
<div class="a" style="left:220px;top:330px;width:330px;height:1px;background:#E2E2E2"></div>
<div class="t" style="left:224px;top:316px;font-size:12px;letter-spacing:0">ESPAÑA</div>
<div class="t" style="left:303px;top:316px;font-size:12px;letter-spacing:0">PUERTO</div>
<div class="t" style="right:381px;top:316px;font-size:12px;letter-spacing:0">42.321</div>
<div class="a" style="left:220px;top:351px;width:330px;height:1px;background:#E2E2E2"></div>
<div class="t" style="left:224px;top:337px;font-size:12px;letter-spacing:0">ESPAÑA</div>
<div class="t" style="left:303px;top:337px;font-size:12px;letter-spacing:0">RETIRO</div>
<div class="t" style="right:381px;top:337px;font-size:12px;letter-spacing:0">37.848</div>
<div class="a" style="left:299px;top:163px;width:1px;height:190px;background:#E2E2E2"></div>
<div class="a" style="left:387px;top:163px;width:1px;height:190px;background:#E2E2E2"></div>
<div class="a" style="left:550px;top:144px;width:16px;height:210px;background:linear-gradient(90deg,#F0F0F0,#FDFDFD 40%,#F3F3F3)"></div>
<div class="a" style="left:550px;top:144px;width:16px;height:16px;border:1px solid #A8A8A8;border-radius:2px;background:linear-gradient(#FEFEFE,#E4E4E4)"></div>
<svg class="a" style="left:0;top:0" width="925" height="669" viewBox="0 0 925 669"><path d="M554.0 154.0L558.0 150.0L562.0 154.0" stroke="#4D5A70" stroke-width="2" fill="none"/></svg>
<div class="a" style="left:550px;top:160px;width:16px;height:80px;border:1px solid #9C9C9C;border-radius:2px;background:linear-gradient(90deg,#FBFBFB,#E9E9E9 60%,#D6D6D6)"></div>
<div class="a" style="left:555px;top:197px;width:6px;height:1px;background:#A0A0A0"></div>
<div class="a" style="left:555px;top:199px;width:6px;height:1px;background:#A0A0A0"></div>
<div class="a" style="left:555px;top:201px;width:6px;height:1px;background:#A0A0A0"></div>
<div class="a" style="left:555px;top:203px;width:6px;height:1px;background:#A0A0A0"></div>
<div class="a" style="left:550px;top:337px;width:16px;height:17px;border:1px solid #A8A8A8;border-radius:2px;background:linear-gradient(#FEFEFE,#E4E4E4)"></div>
<svg class="a" style="left:0;top:0" width="925" height="669" viewBox="0 0 925 669"><path d="M554.0 343.5L558.0 347.5L562.0 343.5" stroke="#4D5A70" stroke-width="2" fill="none"/></svg>
<div class="a" style="left:572px;top:98px;width:350px;height:1px;background:#8DA6C8"></div>
<div class="cap" style="left:572px;top:99px;width:349px;height:20px;border-left:1px solid #8DA6C8;border-right:1px solid #8DA6C8;background:linear-gradient(#D8E6F8,#BCCFE8)"></div>
<div class="t" style="left:577px;top:103px;color:#1F2D5C">Idioma, Unidades vendidas</div>
<div class="a" style="left:885px;top:104px;width:11px;height:10px;border:1px solid #1A3258;border-top-width:2px"></div>
<svg class="a" style="left:904px;top:104px" width="9" height="10"><rect x="0" y="0" width="9" height="2" fill="#1A3258"/><path d="M0 4H9L4.5 9Z" fill="#1A3258"/></svg>
<div class="a" style="left:572px;top:118px;width:350px;height:237px;background:#fff;border-left:1px solid #8DA6C8;border-bottom:1px solid #8DA6C8"></div>
<div class="gh" style="left:573px;top:119px;width:347px;height:20px"></div>
<div class="a" style="left:746px;top:119px;width:1px;height:20px;background:#A9BDD8"></div>
<div class="t" style="left:577px;top:123px;color:#141838">Idioma</div>
<div class="t" style="right:12px;top:123px;color:#141838">Unidades vendidas</div>
<div class="a" style="left:573px;top:160px;width:347px;height:1px;background:#E2E2E2"></div>
<div class="t" style="left:577px;top:145px;font-size:12px;letter-spacing:0">Castellano</div>
<div class="t" style="right:11px;top:145px;font-size:12px;letter-spacing:0">373.360</div>
<div class="a" style="left:573px;top:181px;width:347px;height:1px;background:#E2E2E2"></div>
<div class="t" style="left:577px;top:166px;font-size:12px;letter-spacing:0">Catalán</div>
<div class="t" style="right:11px;top:166px;font-size:12px;letter-spacing:0">23.194</div>
<div class="a" style="left:573px;top:202px;width:347px;height:1px;background:#E2E2E2"></div>
<div class="t" style="left:577px;top:187px;font-size:12px;letter-spacing:0">Francés</div>
<div class="t" style="right:11px;top:187px;font-size:12px;letter-spacing:0">42.265</div>
<div class="a" style="left:573px;top:223px;width:347px;height:1px;background:#E2E2E2"></div>
<div class="t" style="left:577px;top:208px;font-size:12px;letter-spacing:0">Inglés</div>
<div class="t" style="right:11px;top:208px;font-size:12px;letter-spacing:0">355.704</div>
<div class="a" style="left:573px;top:244px;width:347px;height:1px;background:#E2E2E2"></div>
<div class="t" style="left:577px;top:229px;font-size:12px;letter-spacing:0">Portugués</div>
<div class="t" style="right:11px;top:229px;font-size:12px;letter-spacing:0">9.608</div>
<div class="a" style="left:746px;top:139px;width:1px;height:105px;background:#E2E2E2"></div>
<div class="a" style="left:219px;top:381px;width:703px;height:1px;background:#8DA6C8"></div>
<div class="a" style="left:220px;top:364px;width:135px;height:18px;border:1px solid #A8BCD8;border-bottom:none;border-radius:4px 4px 0 0;background:linear-gradient(#E8EFF9,#CCDAEE)"></div>
<div class="t" style="left:225px;top:367px;color:#2B3A62">Mes, Unidades vendidas</div>
<div class="a" style="left:357px;top:362px;width:109px;height:20px;border:1px solid #8DA6C8;border-bottom:none;border-radius:4px 4px 0 0;background:#fff"></div>
<div class="t" style="left:363px;top:367px;font-weight:bold;letter-spacing:-0.28px;color:#000">Trimestre, Importe</div>
<div class="a" style="left:882px;top:366px;width:11px;height:10px;border:1px solid #1A3258;border-top-width:2px"></div>
<svg class="a" style="left:901px;top:366px" width="9" height="10"><rect x="0" y="0" width="9" height="2" fill="#1A3258"/><path d="M0 4H9L4.5 9Z" fill="#1A3258"/></svg>
<div class="a" style="left:219px;top:382px;width:703px;height:235px;background:#fff;border-left:1px solid #8DA6C8"></div>
<div class="a" style="left:246px;top:395px;width:655px;height:217px;background:#6E6E6E;filter:blur(1.6px)"></div>
<div class="a" style="left:241px;top:389px;width:657px;height:220px;background:#DFDFDF"></div>
<svg class="a" style="left:0;top:0" width="925" height="669" viewBox="0 0 925 669"><defs><radialGradient id="tor" gradientUnits="userSpaceOnUse" cx="570.5" cy="499.5" r="105"><stop offset="0.4" stop-color="#000" stop-opacity="0.35"/><stop offset="0.5" stop-color="#000" stop-opacity="0.08"/><stop offset="0.7" stop-color="#000" stop-opacity="0"/><stop offset="0.88" stop-color="#000" stop-opacity="0.08"/><stop offset="1" stop-color="#000" stop-opacity="0.3"/></radialGradient></defs><path d="M675.50 499.50A105 105 0 0 1 572.33 604.48L571.23 541.49A42 42 0 0 0 612.50 499.50Z" fill="#008000"/><path d="M572.33 604.48A105 105 0 0 1 465.76 492.18L528.60 496.57A42 42 0 0 0 571.23 541.49Z" fill="#0000FF"/><path d="M465.76 492.18A105 105 0 0 1 599.44 398.57L582.08 459.13A42 42 0 0 0 528.60 496.57Z" fill="#800080"/><path d="M599.44 398.57A105 105 0 0 1 675.50 499.50L612.50 499.50A42 42 0 0 0 582.08 459.13Z" fill="#00FF00"/><circle cx="570.5" cy="499.5" r="73.5" fill="none" stroke="url(#tor)" stroke-width="63"/><path d="M675.50 499.50A105 105 0 0 1 572.33 604.48L571.23 541.49A42 42 0 0 0 612.50 499.50Z" fill="none" stroke="#000070" stroke-width="1"/><path d="M572.33 604.48A105 105 0 0 1 465.76 492.18L528.60 496.57A42 42 0 0 0 571.23 541.49Z" fill="none" stroke="#000070" stroke-width="1"/><path d="M465.76 492.18A105 105 0 0 1 599.44 398.57L582.08 459.13A42 42 0 0 0 528.60 496.57Z" fill="none" stroke="#000070" stroke-width="1"/><path d="M599.44 398.57A105 105 0 0 1 675.50 499.50L612.50 499.50A42 42 0 0 0 582.08 459.13Z" fill="none" stroke="#000070" stroke-width="1"/></svg>
<div class="t" style="left:521px;top:434px;font-size:11px;letter-spacing:0">Q3</div>
<div class="t" style="left:621px;top:451px;font-size:11px;letter-spacing:0">Q4</div>
<div class="t" style="left:509px;top:545px;font-size:11px;letter-spacing:0">Q2</div>
<div class="t" style="left:614px;top:545px;font-size:11px;letter-spacing:0">Q1</div>
<div class="t" style="left:269px;width:600px;text-align:center;top:481px;color:rgba(150,152,200,0.52);font-size:11px;letter-spacing:0">Dundas Chart - Windows Forms Enterprise Edition</div>
<div class="t" style="left:269px;width:600px;text-align:center;top:493px;color:rgba(150,152,200,0.52);font-size:11px;letter-spacing:0">Evaluation Mode Enabled, for testing purposes only</div>
<div class="t" style="left:269px;width:600px;text-align:center;top:505px;color:rgba(150,152,200,0.52);font-size:11px;letter-spacing:0">(C) 2007 Dundas Data Visualization, Inc. and others, www.dundas.com</div>
<div class="a" style="left:920px;top:56px;width:1px;height:586px;background:#8FA7C8"></div>
<div class="a" style="left:921px;top:27px;width:1px;height:615px;background:#B6C8E0"></div>
<div class="a" style="left:218px;top:617px;width:704px;height:1px;background:#8DA6C8"></div>
<div class="a" style="left:213px;top:618px;width:708px;height:23px;background:#BCCFE7"></div>
<svg class="a" style="left:218px;top:617px" width="58" height="26" viewBox="0 0 58 26"><path d="M0.5 0.5H56L51 19Q49.5 23 44 23.5H14Q8 23 6.5 19Z" fill="#fff" stroke="#8DA6C8"/><path d="M1 0.2H55.5" stroke="#fff" stroke-width="1"/></svg>
<div class="t" style="left:229px;top:622px;font-weight:bold;font-size:12px;letter-spacing:0">Hoja 1</div>
<div class="a" style="left:1px;top:640px;width:212px;height:2px;background:#8DA5C5"></div>
<div class="a" style="left:213px;top:641px;width:709px;height:1px;background:#8DA5C5"></div>
<div class="a" style="left:1px;top:642px;width:921px;height:1px;background:#F4F8FD"></div>
<div class="a" style="left:1px;top:643px;width:921px;height:21px;background:linear-gradient(#DDE7F4,#C2D2E8)"></div>
<div class="t" style="left:5px;top:648px;color:#1E2C50">Anibal</div>
<div class="a" style="left:892px;top:645px;width:16px;height:16px;background:#FBF8E6"></div>
<svg class="a" style="left:892px;top:645px" width="16" height="16" viewBox="0 0 16 16"><defs><radialGradient id="gl" cx="0.5" cy="0.6" r="0.6"><stop offset="0" stop-color="#C8F0A0"/><stop offset="0.55" stop-color="#50D040"/><stop offset="1" stop-color="#10A010"/></radialGradient></defs><circle cx="7.5" cy="8" r="6.8" fill="url(#gl)" stroke="#2A5A28" stroke-width="1"/><ellipse cx="7.5" cy="3.8" rx="4" ry="1.6" fill="rgba(255,255,255,0.55)"/></svg>
<div class="a" style="left:918px;top:651px;width:2px;height:2px;background:#FFFFFF"></div>
<div class="a" style="left:917px;top:650px;width:2px;height:2px;background:#7A90B8"></div>
<div class="a" style="left:914px;top:655px;width:2px;height:2px;background:#FFFFFF"></div>
<div class="a" style="left:913px;top:654px;width:2px;height:2px;background:#7A90B8"></div>
<div class="a" style="left:918px;top:655px;width:2px;height:2px;background:#FFFFFF"></div>
<div class="a" style="left:917px;top:654px;width:2px;height:2px;background:#7A90B8"></div>
<div class="a" style="left:910px;top:659px;width:2px;height:2px;background:#FFFFFF"></div>
<div class="a" style="left:909px;top:658px;width:2px;height:2px;background:#7A90B8"></div>
<div class="a" style="left:914px;top:659px;width:2px;height:2px;background:#FFFFFF"></div>
<div class="a" style="left:913px;top:658px;width:2px;height:2px;background:#7A90B8"></div>
<div class="a" style="left:918px;top:659px;width:2px;height:2px;background:#FFFFFF"></div>
<div class="a" style="left:917px;top:658px;width:2px;height:2px;background:#7A90B8"></div>
</body></html>
